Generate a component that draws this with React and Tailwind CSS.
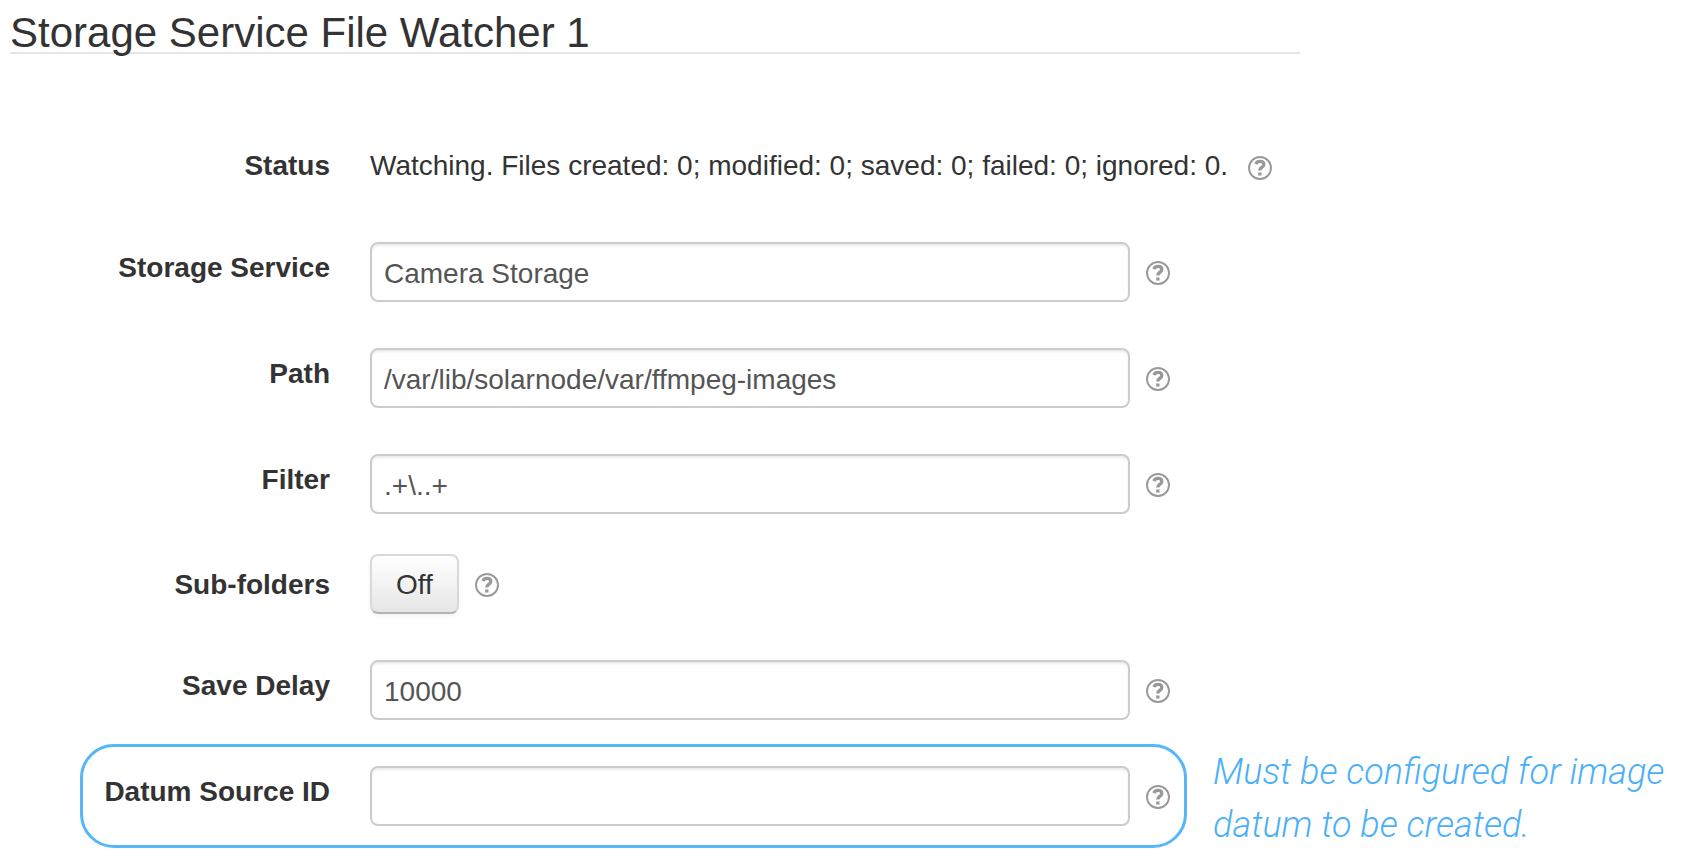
import React, { useState } from "react";

function HelpButton({ topic }) {
  return (
    <button
      type="button"
      aria-label={`Help: ${topic}`}
      className="mt-0.5 size-6 shrink-0 cursor-pointer text-[#999]"
    >
      <svg viewBox="0 0 24 24" className="block size-6" fill="none" stroke="currentColor">
        <circle cx="12" cy="12" r="11" strokeWidth="1.9" />
        <path
          d="M7.8 7.9C8.7 6.1 10.1 5.4 12 5.4c2.4 0 3.8 1.2 3.8 3 0 1.6-.9 2.3-2.2 3.1-1.3.8-1.8 1.4-1.8 3.1"
          strokeWidth="3.3"
        />
        <path d="M10.2 18h3.3" strokeWidth="3.1" />
      </svg>
    </button>
  );
}

const LABEL = "w-80 shrink-0 text-right font-bold leading-10";

function TextRow({ id, label, value }) {
  return (
    <div className="flex items-center gap-4">
      <div className="flex min-w-0 items-start gap-10">
        <label htmlFor={id} className={`${LABEL} pt-1.5`}>
          {label}
        </label>
        <input
          id={id}
          type="text"
          defaultValue={value}
          className="h-15 w-[760px] min-w-0 rounded-lg border-2 border-[#ccc] bg-white px-3 pt-1 text-[#555] shadow-[inset_0_2px_2px_rgba(0,0,0,0.075)] outline-none"
        />
      </div>
      <HelpButton topic={label} />
    </div>
  );
}

export default function App() {
  const [on, setOn] = useState(false);
  return (
    <main className="bg-white px-2.5 pt-[13px] pb-9 font-['Liberation_Sans',Arial,sans-serif] text-[28px] text-[#333]">
      <h1 className="max-w-[1290px] border-b-2 border-[#e5e5e5] text-[42px] leading-[39px]">
        Storage Service File Watcher 1
      </h1>

      <form className="pt-[92px]">
        <div className="flex items-start gap-10">
          <div className={LABEL}>Status</div>
          <div className="flex items-start gap-5 leading-10">
            <span>Watching. Files created: 0; modified: 0; saved: 0; failed: 0; ignored: 0.</span>
            <div className="flex pt-2">
              <HelpButton topic="Status" />
            </div>
          </div>
        </div>

        <div className="mt-14 flex flex-col gap-[46px]">
          <TextRow id="storage-service" label="Storage Service" value="Camera Storage" />
          <TextRow id="path" label="Path" value="/var/lib/solarnode/var/ffmpeg-images" />
          <TextRow id="filter" label="Filter" value={".+\\..+"} />
        </div>

        <div className="mt-10 flex items-center gap-10">
          <label htmlFor="sub-folders" className={`${LABEL} pt-0.5`}>
            Sub-folders
          </label>
          <div className="flex items-center gap-4">
            <button
              id="sub-folders"
              type="button"
              aria-pressed={on}
              onClick={() => setOn(!on)}
              className="h-15 cursor-pointer rounded-lg border-2 border-[#d9d9d9] border-b-[#b3b3b3] bg-linear-to-b from-white to-[#e6e6e6] px-6 pt-0.5 shadow-[inset_0_2px_0_rgba(255,255,255,0.2),0_2px_4px_rgba(0,0,0,0.05)]"
            >
              {on ? "On" : "Off"}
            </button>
            <HelpButton topic="Sub-folders" />
          </div>
        </div>

        <div className="mt-[46px]">
          <TextRow id="save-delay" label="Save Delay" value="10000" />
        </div>

        <div className="mt-[46px] flex items-center gap-[43px]">
          <div className="relative">
            <TextRow id="datum-source-id" label="Datum Source ID" value="" />
            <div className="pointer-events-none absolute -inset-y-[22px] -right-[17px] left-[70px] rounded-[34px] border-3 border-[#57b6f8]" />
          </div>
          <p className="-my-8 pt-1.5 font-['Roboto',sans-serif] text-4xl leading-[53px] font-light text-[#4cb0f8] italic">
            Must be configured for image
            <br />
            datum to be created.
          </p>
        </div>
      </form>
    </main>
  );
}
